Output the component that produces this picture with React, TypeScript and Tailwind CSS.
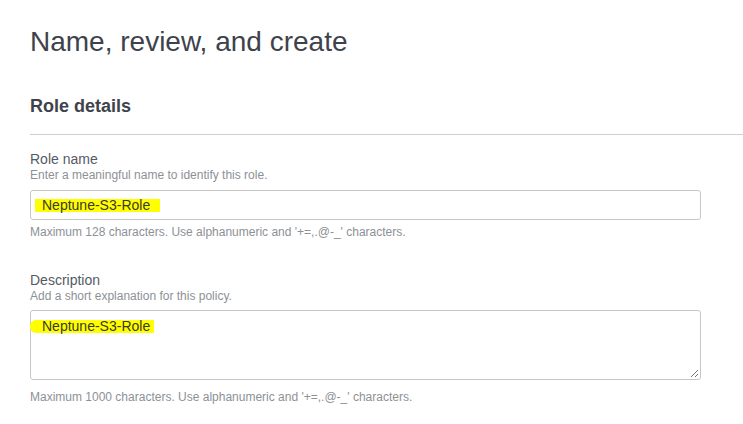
import { FC } from 'react';

const font = "font-['Helvetica','Liberation_Sans',Arial,sans-serif]";

const Marker: FC<{ text: string; slant?: boolean }> = ({ text, slant }) => (
  <span
    className={`inline-block h-[13px] bg-[#ffff00] text-[14px] leading-[13px] text-[#3a3a2a] ${
      slant ? 'rounded-l-[6px] pl-[12px] pr-[4px]' : 'pl-[7px] pr-[10px]'
    }`}
  >
    {text}
  </span>
);

const Field: FC<{ label: string; hint: string; note: string; multiline?: boolean }> = ({
  label,
  hint,
  note,
  multiline,
}) => (
  <div className="flex flex-col">
    <label className="text-[14px] leading-[17px] text-[#545b64]">{label}</label>
    <span className="text-[12px] leading-[14px] text-[#8d9196]">{hint}</span>
    {multiline ? (
      <div className="relative mt-[7px] h-[70px] w-[671px] rounded-[3px] border border-[#c6c6c6] bg-white pt-[7px]">
        <div className="-ml-px -mt-[4px]">
          <Marker text="Neptune-S3-Role" slant />
        </div>
        <svg className="absolute bottom-[1px] right-[1px]" width="9" height="9" viewBox="0 0 9 9">
          <path d="M8 1 L1 8 M8 5 L5 8" stroke="#777" strokeWidth="1" />
        </svg>
      </div>
    ) : (
      <div className="mt-[8px] flex h-[30px] w-[671px] items-center rounded-[3px] border border-[#c6c6c6] bg-white pl-[4px]">
        <Marker text="Neptune-S3-Role" />
      </div>
    )}
    <span className={`text-[12px] leading-[14px] text-[#8d9196] ${multiline ? 'mt-[10px]' : 'mt-[5px]'}`}>
      {note}
    </span>
  </div>
);

export default function App() {
  return (
    <div className={`h-[424px] w-[743px] overflow-hidden bg-white pl-[30px] pt-[26px] ${font}`}>
      <h1 className="text-[28px] leading-[32px] font-normal text-[#3e434b]">Name, review, and create</h1>
      <h2 className="mt-[36px] text-[18px] leading-[24px] font-bold text-[#3e434b]">Role details</h2>
      <div className="mt-[16px] h-px w-full bg-[#cfcfcf]" />
      <div className="mt-[16px] flex flex-col gap-[33px]">
        <Field
          label="Role name"
          hint="Enter a meaningful name to identify this role."
          note="Maximum 128 characters. Use alphanumeric and '+=,.@-_' characters."
        />
        <Field
          label="Description"
          hint="Add a short explanation for this policy."
          note="Maximum 1000 characters. Use alphanumeric and '+=,.@-_' characters."
          multiline
        />
      </div>
    </div>
  );
}
